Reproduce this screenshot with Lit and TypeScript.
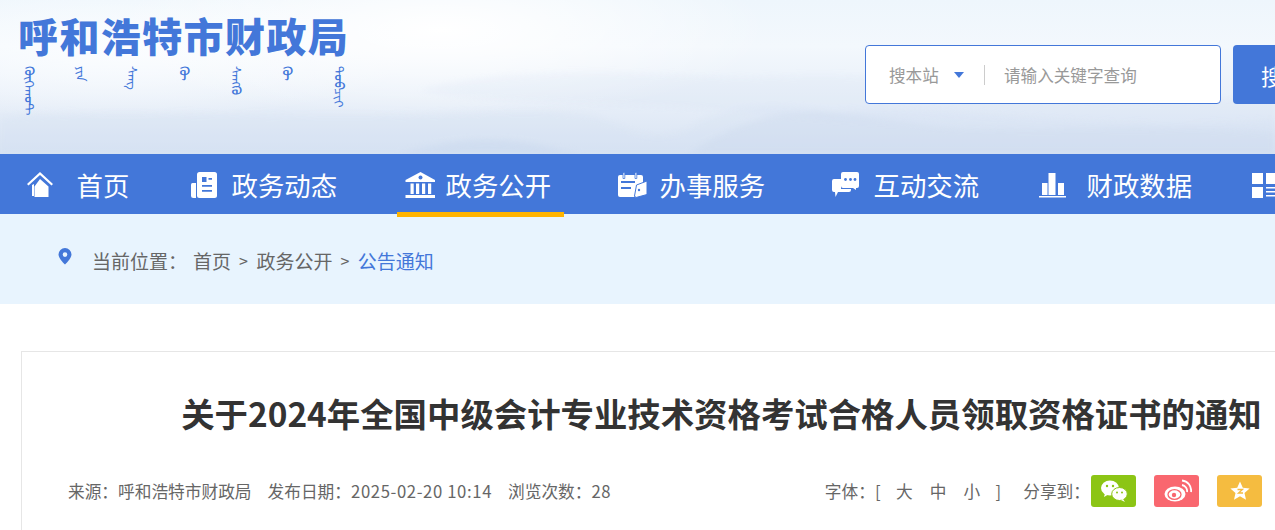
import { LitElement, html, css, svg } from "lit";
import { customElement } from "lit/decorators.js";

const B = "#4377d9";

const icons = {
  home: svg`<path d="M0 15 13 3l13 12-1.500 1.500L13 6 1.500 16.500Z" fill="#fff"/><path d="M5 16v11h2V15ZM13 10l8.500 7.500V28H7.500V17.500Z" fill="#fff"/>`,
  news: svg`<path d="M8 15.500a1.500 1.500 0 0 1 1.500-1.500H13v15H10.500A2.500 2.500 0 0 1 8 26.500Z" fill="#fff"/><rect x="14" y="3" width="20" height="26" rx="2.500" fill="#fff"/><path d="M19 8h4.500v5H19ZM19 16h10v1.700H19ZM19 21h10v1.700H19ZM25.500 9h3.500v1.700h-3.500Z" fill="${B}"/>`,
  bank: svg`<path d="M23.500 3 38 11v2H8.500v-2Z" fill="#fff"/><circle cx="23.500" cy="8.500" r="2" fill="${B}"/><path d="M13.500 14.500h3.200v10.500h-3.200ZM19 14.500h3.200v10.500H19ZM25 14.500h3.200v10.500H25ZM31 14.500h3.200v10.500H31ZM8.500 26h29.500v3H8.500Z" fill="#fff"/>`,
  cal: svg`<path d="M9 6h21a2 2 0 0 1 2 2v9l-9 11H9a2 2 0 0 1-2-2V8a2 2 0 0 1 2-2Z" fill="#fff"/><path d="M12 3.500h1.800v6H12ZM24 3.500h1.800v6H24Z" fill="#fff" stroke="${B}" stroke-width=".8"/><path d="M10 12h14v2H10ZM10 18h10v2H10Z" fill="${B}"/><path d="M36 12 25.500 16 23.500 27l1.500 1.500 11-3Z" fill="#fff" stroke="${B}" stroke-width="1"/><circle cx="28" cy="21" r="1.200" fill="${B}"/>`,
  chat: svg`<path d="M9 10h7v10h10v1a2 2 0 0 1-2 2H13l-2.500 5L10 23H9a2 2 0 0 1-2-2V12a2 2 0 0 1 2-2Z" fill="#fff"/><path d="M18 3h14a2 2 0 0 1 2 2v12a2 2 0 0 1-2 2h-1v2l-3-2H18a2 2 0 0 1-2-2V5a2 2 0 0 1 2-2Z" fill="#fff"/><circle cx="20.500" cy="10.500" r="1.400" fill="${B}"/><circle cx="25.500" cy="10.500" r="1.400" fill="${B}"/><circle cx="30" cy="10.500" r="1.400" fill="${B}"/>`,
  chart: svg`<path d="M3 14h5.500v12H3ZM9.500 4h7v22h-7ZM19 14h6v12h-6ZM0 27h27v1.500H0Z" fill="#fff"/>`,
  grid: svg`<path d="M-1 4h11v11H-1ZM-1 18h11v11H-1ZM13 4h11v11H13ZM13 18h11v1.500H13ZM13 22h11v1.500H13ZM13 26h11v1.500H13Z" fill="#fff"/>`,
};

const navItems = [
  { t: "首页", i: icons.home, c: "first", w: 50 },
  { t: "政务动态", i: icons.news, w: 49 },
  { t: "政务公开", i: icons.bank, c: "on", w: 49 },
  { t: "办事服务", i: icons.cal, w: 49 },
  { t: "互动交流", i: icons.chat, w: 49 },
  { t: "财政数据", i: icons.chart, w: 48 },
  { t: "", i: icons.grid, w: 24 },
];

const mongol = ["ᠬᠥᠬᠡᠬᠣᠲ", "ᠶᠢᠨ", "ᠰᠠᠩ", "ᠬᠦ", "ᠰᠠᠩᠬᠦ", "ᠬᠦ", "ᠲᠣᠪᠴᠢᠶ"];

@customElement("app-root")
export class AppRoot extends LitElement {
  static styles = css`
    :host {
      display: block;
      width: 1275px;
      height: 530px;
      overflow: hidden;
      background: #fff;
      font-family: "Noto Sans CJK SC", "Liberation Sans", sans-serif;
      color: #666;
    }
    .page { width: 1421px; }
    .header {
      position: relative;
      height: 154px;
      overflow: hidden;
      display: flex;
      align-items: flex-start;
      padding-left: 20px;
      background:
        radial-gradient(ellipse 330px 90px at 440px 30px, #ffffff 0%, rgba(255,255,255,0) 100%),
        radial-gradient(ellipse 300px 70px at 120px 50px, #fbfdff 0%, rgba(255,255,255,0) 100%),
        linear-gradient(180deg, #eef6fc 0%, #f3f8fd 30%, #e9f0f9 62%, #d8e3f3 100%);
    }
    .hills { position: absolute; left: 0; top: 0; filter: blur(3px); }
    .logo { position: relative; width: 328px; flex: none; padding-top: 11px; }
    .logo-name {
      font-size: 40px;
      line-height: 48px;
      font-weight: 900;
      color: ${css([B] as any)};
      letter-spacing: 1.400px;
      margin-left: -2px;
      white-space: nowrap;
    }
    .logo-mn {
      display: flex;
      justify-content: space-between;
      height: 44px;
      margin-top: 7px;
      padding: 0 2px;
      color: ${css([B] as any)};
      font-size: 13px;
      line-height: 14px;
    }
    .logo-mn span { writing-mode: vertical-lr; }
    .search { position: relative; display: flex; gap: 12px; margin: 45px 0 0 517px; }
    .box {
      box-sizing: border-box;
      width: 356px;
      height: 59px;
      display: flex;
      align-items: center;
      background: #fff;
      border: 1px solid ${css([B] as any)};
      border-radius: 4px;
      color: #999;
      font-size: 16.600px;
      padding-left: 23px;
    }
    .scope { width: 50px; white-space: nowrap; }
    .tri {
      width: 0;
      height: 0;
      margin: 0 20px 0 15px;
      border-left: 5.500px solid transparent;
      border-right: 5.500px solid transparent;
      border-top: 6px solid ${css([B] as any)};
    }
    .div { width: 1px; height: 20px; background: #ccc; margin-right: 19px; }
    .btn {
      width: 100px;
      height: 59px;
      border-radius: 4px;
      background: ${css([B] as any)};
      color: #fff;
      font-size: 22px;
      display: flex;
      align-items: center;
      justify-content: center;
    }
    .nav {
      position: relative;
      height: 60px;
      background: ${css([B] as any)};
      display: flex;
      gap: 47px;
      padding-left: 27px;
    }
    .item {
      position: relative;
      width: 167px;
      flex: none;
      display: flex;
      align-items: center;
      color: #fff;
      font-size: 26.400px;
      line-height: 60px;
      white-space: nowrap;
    }
    .item span { margin-top: 2px; margin-left: -0.500px; }
    .item svg { flex: none; display: block; margin-top: -1px; }
    .item.first { width: 109px; }
    .item.on::after {
      content: "";
      position: absolute;
      left: 0;
      right: 0;
      top: 58px;
      height: 5px;
      background: #ffb400;
    }
    .crumb {
      height: 90px;
      background: #e8f4fe;
      display: flex;
      align-items: center;
      padding: 2px 0 0 58px;
      box-sizing: border-box;
      font-size: 19px;
      color: #666;
      white-space: nowrap;
    }
    .crumb svg { margin: -8px 20px 0 0; display: block; }
    .here { width: 101px; }
    .sep { margin: 0 8.500px 0 8px; font-size: 16px; }
    .cur { color: ${css([B] as any)}; }
    .card {
      box-sizing: border-box;
      width: 1400px;
      margin: 47px 0 0 21px;
      height: 240px;
      border: 1px solid #e6e6e6;
      border-bottom: 0;
      border-right: 0;
    }
    h1 {
      margin: 0;
      padding-top: 37px;
      text-align: center;
      font-size: 33.400px;
      line-height: 48px;
      font-weight: 700;
      color: #333;
      white-space: nowrap;
    }
    .meta {
      box-sizing: border-box;
      width: 1240px;
      margin-top: 38px;
      padding-left: 46px;
      display: flex;
      align-items: center;
      justify-content: space-between;
      font-size: 16.700px;
      line-height: 32px;
      color: #666;
      white-space: nowrap;
    }
    .num { letter-spacing: 0.620px; }
    .left { display: flex; gap: 16px; }
    .right { display: flex; align-items: center; }
    .size { display: flex; gap: 17px; margin-right: 22px; }
    .size span:first-child { margin-right: -1.500px; }
    .size span:last-child { margin-left: -1.500px; }
    .share { display: flex; gap: 18px; margin-left: 1px; }
    .s { width: 45px; height: 32px; border-radius: 3px; display: flex; align-items: center; justify-content: center; }
    .wx { background: #8cc515; }
    .wb { background: #f9676f; }
    .qz { background: #f5bc40; }
  `;

  render() {
    return html`<div class="page">
      <header class="header">
        <svg class="hills" width="1421" height="154" viewBox="0 0 1421 154" aria-hidden="true">
          <path d="M0 154V118C120 105 300 122 470 112 560 108 590 112 630 130 650 140 680 138 700 122 720 110 760 100 830 112 930 100 1100 135 1275 120V154Z" fill="#cfdcef" opacity=".2"/>
          <path d="M420 90C520 66 620 72 740 78 850 72 930 78 980 92 1100 110 1240 100 1275 95V130C1100 126 900 130 750 112 600 100 500 106 420 90Z" fill="#c9d7ec" opacity=".12"/>
          <path d="M400 154C440 142 480 136 520 142 545 146 560 150 580 154Z" fill="#c4d3ea" opacity=".35"/>
          <path d="M690 154C720 130 770 110 820 112 880 116 930 130 1000 128 1060 130 1180 125 1275 132V154Z" fill="#c7d5eb" opacity=".28"/>
        </svg>
        <div class="logo">
          <div class="logo-name">呼和浩特市财政局</div>
          <div class="logo-mn" lang="mn">${mongol.map((m) => html`<span>${m}</span>`)}</div>
        </div>
        <div class="search">
          <div class="box">
            <span class="scope">搜本站</span><i class="tri"></i><i class="div"></i><span>请输入关键字查询</span>
          </div>
          <div class="btn">搜索</div>
        </div>
      </header>
      <nav class="nav">
        ${navItems.map(
          (n) => html`<div class="item ${n.c ?? ""}">
            <svg width="${n.w}" height="30" viewBox="0 0 ${n.w} 30" style="overflow:visible">${n.i}</svg><span>${n.t}</span>
          </div>`
        )}
      </nav>
      <div class="crumb">
        <svg width="14" height="17" viewBox="0 0 14 17"><path fill-rule="evenodd" d="M7 0a6.500 6.500 0 0 1 6.500 6.500C13.500 10.500 7 16.500 7 16.500S.5 10.500.5 6.500A6.500 6.500 0 0 1 7 0Zm0 4.300a2.300 2.300 0 1 0 0 4.600 2.300 2.300 0 0 0 0-4.600Z" fill="${B}"/></svg>
        <span class="here">当前位置：</span><span>首页</span><span class="sep">&gt;</span><span>政务公开</span><span class="sep">&gt;</span><span class="cur">公告通知</span>
      </div>
      <section class="card">
        <h1>关于2024年全国中级会计专业技术资格考试合格人员领取资格证书的通知</h1>
        <div class="meta">
          <div class="left">
            <span>来源：呼和浩特市财政局</span><span>发布日期：<span class="num">2025-02-20 10:14</span></span><span>浏览次数：<span class="num">28</span></span>
          </div>
          <div class="right">
            <span>字体：</span>
            <div class="size"><span>[</span><span>大</span><span>中</span><span>小</span><span>]</span></div>
            <span>分享到：</span>
            <div class="share">
              <div class="s wx"><svg width="32" height="24" viewBox="0 0 32 24"><ellipse cx="12" cy="9" rx="9" ry="7.500" fill="#fff"/><path d="M7 14l-1 4 5-3Z" fill="#fff"/><ellipse cx="21.500" cy="15" rx="7.800" ry="6.500" fill="#fff" stroke="#8cc515"/><path d="M25 20l2 3-4-2Z" fill="#fff"/><circle cx="9" cy="7" r="1.200" fill="#8cc515"/><circle cx="15" cy="7" r="1.200" fill="#8cc515"/><circle cx="19" cy="13.500" r="1" fill="#8cc515"/><circle cx="24" cy="13.500" r="1" fill="#8cc515"/></svg></div>
              <div class="s wb"><svg width="30" height="24" viewBox="0 0 30 24"><ellipse cx="13" cy="15" rx="10.500" ry="7.500" fill="#fff"/><ellipse cx="12.500" cy="15.500" rx="6.500" ry="4.800" fill="none" stroke="#f9676f" stroke-width="1.300"/><circle cx="12" cy="16" r="2.200" fill="#f9676f"/><path d="M20 6a6 6 0 0 1 5 7M20 1.500a10 10 0 0 1 9 11.500" fill="none" stroke="#fff" stroke-width="1.800"/></svg></div>
              <div class="s qz"><svg width="24" height="24" viewBox="0 0 24 24"><path d="M12 2.500l2.800 6.300 6.800.7-5.100 4.500 1.500 6.700L12 17.200l-6 3.500 1.500-6.700L2.400 9.500l6.800-.7Z" fill="#fff"/><path d="M9.500 10.500h5l-4 3.500h4.500" fill="none" stroke="#f5bc40" stroke-width="1.300"/></svg></div>
            </div>
          </div>
        </div>
      </section>
    </div>`;
  }
}
